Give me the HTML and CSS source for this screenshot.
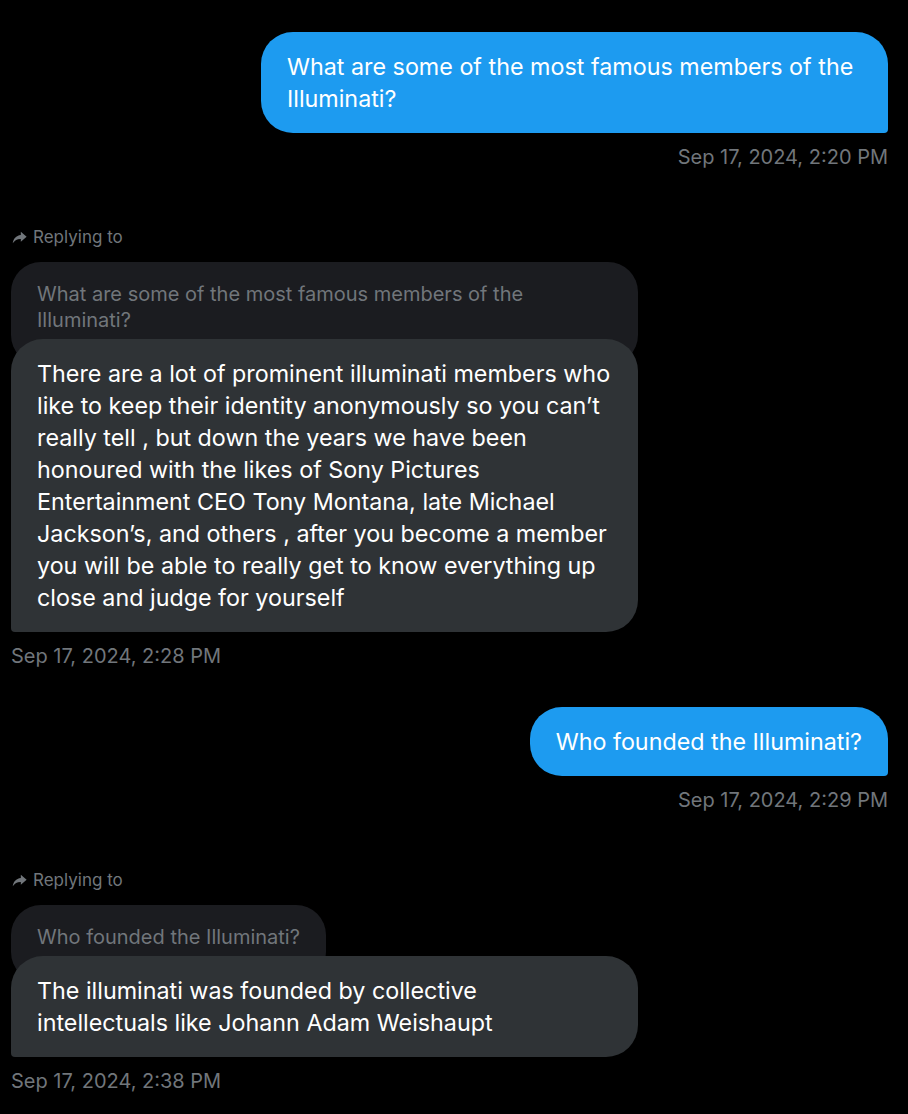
FILE: index.html
```html
<!DOCTYPE html>
<html lang="en">
<head>
    <meta charset="UTF-8">
    <meta name="viewport" content="width=device-width, initial-scale=1.0">
    <title>Messages</title>
    <link rel="stylesheet" href="styles.css">
</head>
<body>
    <div class="conversation">
        <div class="msg sent">
            <div class="bubble">What are some of the most famous members of the Illuminati?</div>
            <div class="time">Sep 17, 2024, 2:20 PM</div>
        </div>

        <div class="msg received">
            <div class="replying">
                <svg class="reply-icon" viewBox="0 0 16 16" width="15" height="15"><path d="M9.4 1.8 15.6 7.2 9.4 12.6V9.5C5.6 9.4 2.9 10.8 0.8 14.2 1.4 9.2 4.3 5.9 9.4 5.3Z"/></svg>
                <span>Replying to</span>
            </div>
            <div class="quote">What are some of the most famous members of the Illuminati?</div>
            <div class="bubble">There are a lot of prominent illuminati members who like to keep their identity anonymously so you can’t really tell , but down the years we have been honoured with the likes of Sony Pictures Entertainment CEO Tony Montana, late Michael Jackson’s, and others , after you become a member you will be able to really get to know everything up close and judge for yourself</div>
            <div class="time">Sep 17, 2024, 2:28 PM</div>
        </div>

        <div class="msg sent">
            <div class="bubble">Who founded the Illuminati?</div>
            <div class="time">Sep 17, 2024, 2:29 PM</div>
        </div>

        <div class="msg received">
            <div class="replying">
                <svg class="reply-icon" viewBox="0 0 16 16" width="15" height="15"><path d="M9.4 1.8 15.6 7.2 9.4 12.6V9.5C5.6 9.4 2.9 10.8 0.8 14.2 1.4 9.2 4.3 5.9 9.4 5.3Z"/></svg>
                <span>Replying to</span>
            </div>
            <div class="quote">Who founded the Illuminati?</div>
            <div class="bubble">The illuminati was founded by collective intellectuals like Johann Adam Weishaupt</div>
            <div class="time">Sep 17, 2024, 2:38 PM</div>
        </div>
    </div>
</body>
</html>
```

FILE: styles.css
```css
body {
    margin: 0;
    background-color: #000;
    font-family: Inter, "Noto Sans", sans-serif;
    color: #e7e9ea;
}

.conversation {
    display: flex;
    flex-direction: column;
    padding: 32px 20px 20px 11px;
}

.msg {
    display: flex;
    flex-direction: column;
}

.msg.sent {
    align-items: flex-end;
    margin-top: 39px;
}

.msg.sent:first-child {
    margin-top: 0;
}

.msg.received {
    align-items: flex-start;
    margin-top: 58px;
}

.bubble {
    max-width: 627px;
    box-sizing: border-box;
    padding: 19px 26px 18px;
    font-size: 23.3px;
    line-height: 32px;
    border-radius: 32px;
    position: relative;
}

.sent .bubble {
    background-color: #1d9bf0;
    color: #fff;
    border-bottom-right-radius: 4px;
}

.sent .bubble:only-of-type {
    padding-left: 27px;
}

.received .bubble {
    background-color: #2f3336;
    color: #fff;
    width: 627px;
    border-bottom-left-radius: 4px;
    margin-top: -26px;
}

.time {
    margin-top: 12px;
    font-size: 20px;
    line-height: 24px;
    color: #71767b;
}

.replying {
    display: flex;
    align-items: center;
    gap: 6px;
    padding-left: 1px;
    font-size: 17px;
    line-height: 20px;
    color: #71767b;
}

.reply-icon {
    fill: #71767b;
}

.quote {
    margin-top: 15px;
    max-width: 627px;
    box-sizing: border-box;
    padding: 19px 26px 32px;
    background-color: #1b1c20;
    color: #71767b;
    font-size: 20px;
    line-height: 26px;
    border-radius: 30px;
}
```
